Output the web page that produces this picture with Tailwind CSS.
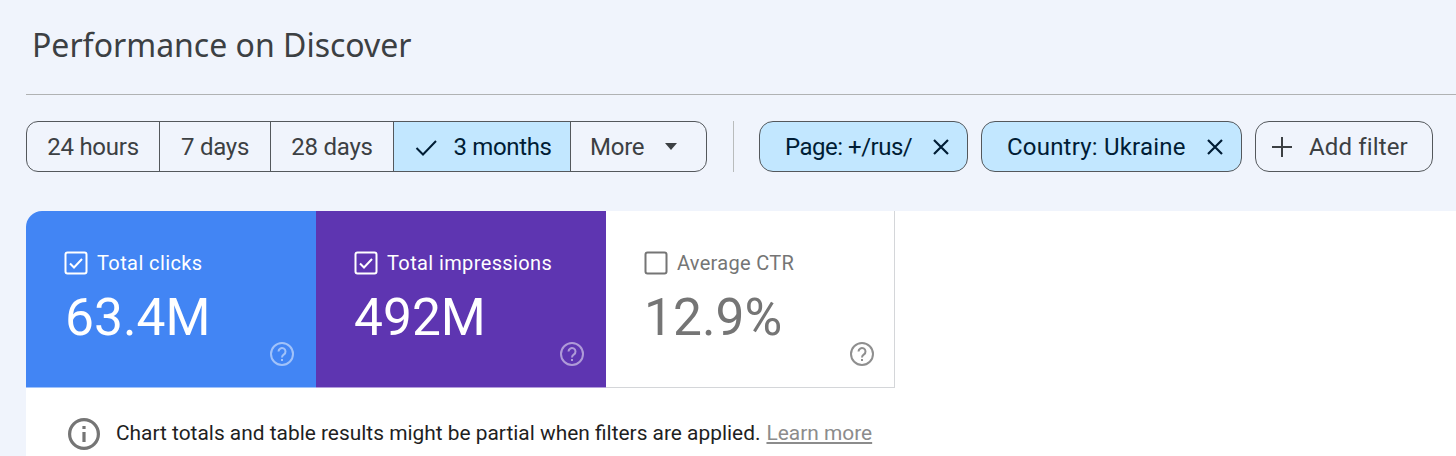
<!DOCTYPE html>
<html lang="en">
<head>
    <meta charset="UTF-8">
    <title>Performance on Discover</title>
    <script src="https://cdn.jsdelivr.net/npm/@tailwindcss/browser@4"></script>
</head>
<body class="bg-[#f0f4fc] h-[456px] w-[1456px] overflow-hidden font-['Roboto',sans-serif]">
    <!-- header -->
    <div class="pl-[26px]">
        <div class="h-[95px] border-b border-[#b0b2b3] pl-[6px] pt-[25px]">
            <h1 class="text-[32px] leading-[40px] text-[#3c4043] font-['Noto_Sans',sans-serif]">Performance on Discover</h1>
        </div>
    </div>

    <!-- filter row -->
    <div class="flex items-center pl-[26px] mt-[26px] h-[51px] text-[24px] text-[#3c4043]">
        <div class="flex h-full w-[681px] border border-[#54585c] rounded-[12px] overflow-hidden tracking-[-0.25px]">
            <div class="w-[133px] flex items-center justify-center border-r border-[#54585c]">24 hours</div>
            <div class="w-[111px] flex items-center justify-center border-r border-[#54585c]">7 days</div>
            <div class="w-[123px] flex items-center justify-center border-r border-[#54585c]">28 days</div>
            <div class="w-[177px] flex items-center justify-center gap-[15px] border-r border-[#54585c] bg-[#c2e7ff] text-[#001d35] tracking-[-0.35px] pl-[2px]">
                <svg class="w-[24px] h-[24px]" viewBox="0 0 24 24" fill="none" stroke="#001d35" stroke-width="2"><path d="M2.500 13l6.500 6.500L22 6"/></svg>
                <span>3 months</span>
            </div>
            <div class="flex-1 flex items-center pl-[19px]">
                <span>More</span>
                <svg class="w-[12px] h-[7px] ml-[21px]" viewBox="0 0 14 8" fill="#3c4043"><path d="M0 0h14L7 8z"/></svg>
            </div>
        </div>

        <div class="w-px h-full bg-[#b9bcbc] ml-[26px] mr-[25px]"></div>

        <div class="flex items-center h-full w-[209px] pl-[25px] border border-[#54585c] rounded-[14px] bg-[#c2e7ff] text-[#001d35]">
            <span class="tracking-[-0.5px]">Page: +/rus/</span>
            <svg class="w-[18px] h-[18px] ml-[20px]" viewBox="0 0 18 18" fill="none" stroke="#001d35" stroke-width="2.200"><path d="M2 2l14 14M16 2L2 16"/></svg>
        </div>
        <div class="flex items-center h-full w-[261px] ml-[13px] pl-[25px] border border-[#54585c] rounded-[14px] bg-[#c2e7ff] text-[#001d35]">
            <span class="tracking-[0.2px]">Country: Ukraine</span>
            <svg class="w-[18px] h-[18px] ml-[20px]" viewBox="0 0 18 18" fill="none" stroke="#001d35" stroke-width="2.200"><path d="M2 2l14 14M16 2L2 16"/></svg>
        </div>
        <div class="flex items-center h-full w-[178px] ml-[13px] pl-[15px] border border-[#54585c] rounded-[14px]">
            <svg class="w-[22px] h-[22px] mr-[16px]" viewBox="0 0 22 22" fill="none" stroke="#3c4043" stroke-width="2"><path d="M11 1v20M1 11h20"/></svg>
            <span class="tracking-[0.15px]">Add filter</span>
        </div>
    </div>

    <!-- white panel -->
    <div class="ml-[26px] mt-[39px] bg-white h-[245px] rounded-tl-[16px]">
        <div class="flex h-[177px]">
            <div class="relative w-[290px] bg-[#4285f4] border-b border-[#a0c3fa] rounded-tl-[16px] pl-[38px] pt-[39px] text-white">
                <div class="flex items-center gap-[9px] h-[26px] text-[20px] tracking-[0.4px]">
                    <svg class="w-[24px] h-[24px]" viewBox="0 0 24 24" fill="none" stroke="#fff"><rect x="1.500" y="1.500" width="21" height="21" rx="2" stroke-width="2"/><path d="M6 12.500l4 4 8-8.500" stroke-width="2"/></svg>
                    <span>Total clicks</span>
                </div>
                <div class="text-[51.500px] leading-[60px] mt-[12px] ml-[1px]">63.4M</div>
                <svg class="absolute right-[22px] bottom-[21px] w-[24px] h-[24px]" viewBox="0 0 24 24" fill="none" stroke="#fff" stroke-opacity="0.5" stroke-width="2"><circle cx="12" cy="12" r="11"/><path d="M8.500 9.500a3.500 3.500 0 1 1 5.500 2.900c-1.300.9-2 1.500-2 3.100"/><path d="M12 17v2"/></svg>
            </div>
            <div class="relative w-[290px] bg-[#5e35b1] border-b border-[#b39ddb] pl-[38px] pt-[39px] text-white">
                <div class="flex items-center gap-[9px] h-[26px] text-[20px] tracking-[0.38px]">
                    <svg class="w-[24px] h-[24px]" viewBox="0 0 24 24" fill="none" stroke="#fff"><rect x="1.500" y="1.500" width="21" height="21" rx="2" stroke-width="2"/><path d="M6 12.500l4 4 8-8.500" stroke-width="2"/></svg>
                    <span>Total impressions</span>
                </div>
                <div class="text-[51.500px] leading-[60px] mt-[12px]">492M</div>
                <svg class="absolute right-[22px] bottom-[21px] w-[24px] h-[24px]" viewBox="0 0 24 24" fill="none" stroke="#fff" stroke-opacity="0.5" stroke-width="2"><circle cx="12" cy="12" r="11"/><path d="M8.500 9.500a3.500 3.500 0 1 1 5.500 2.900c-1.300.9-2 1.500-2 3.100"/><path d="M12 17v2"/></svg>
            </div>
            <div class="relative w-[289px] bg-white border-b border-r border-[#d4d6d9] pl-[38px] pt-[39px] text-[#757575]">
                <div class="flex items-center gap-[9px] h-[26px] text-[20px] tracking-[0.3px]">
                    <svg class="w-[24px] h-[24px]" viewBox="0 0 24 24" fill="none" stroke="#757575"><rect x="1.500" y="1.500" width="21" height="21" rx="2" stroke-width="2"/></svg>
                    <span>Average CTR</span>
                </div>
                <div class="text-[51.500px] leading-[60px] mt-[12px]">12.9%</div>
                <svg class="absolute right-[20px] bottom-[21px] w-[24px] h-[24px]" viewBox="0 0 24 24" fill="none" stroke="#8f8f8f" stroke-width="2"><circle cx="12" cy="12" r="11"/><path d="M8.500 9.500a3.500 3.500 0 1 1 5.500 2.900c-1.300.9-2 1.500-2 3.100"/><path d="M12 17v2"/></svg>
            </div>
        </div>
        <div class="flex items-center h-[68px] pl-[42px] pt-[23px] text-[20.900px] text-[#1f1f1f]">
            <svg class="w-[32px] h-[32px] mr-[16px]" viewBox="0 0 32 32" fill="none" stroke="#757575" stroke-width="3.200"><circle cx="16" cy="16" r="14.400"/><path d="M16 14v10M16 8v3"/></svg>
            <span>Chart totals and table results might be partial when filters are applied.</span>
            <a class="ml-[6px] text-[#8c8c8c] underline">Learn more</a>
        </div>
    </div>
</body>
</html>
